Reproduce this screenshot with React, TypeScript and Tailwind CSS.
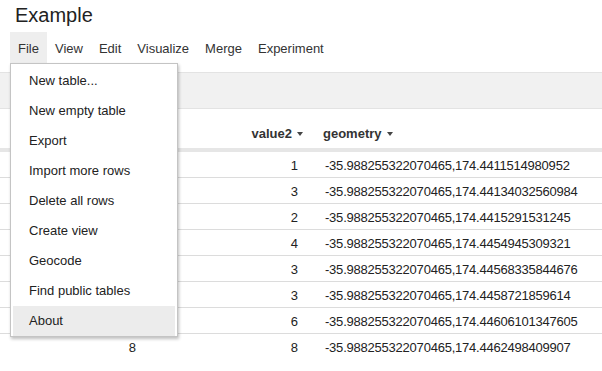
import React from 'react';

const menus = ['File', 'View', 'Edit', 'Visualize', 'Merge', 'Experiment'];

const fileItems = [
    'New table...',
    'New empty table',
    'Export',
    'Import more rows',
    'Delete all rows',
    'Create view',
    'Geocode',
    'Find public tables',
    'About',
];

const rows = [
    { value: 1, value2: 1, geometry: '-35.988255322070465,174.4411514980952' },
    { value: 2, value2: 3, geometry: '-35.988255322070465,174.44134032560984' },
    { value: 3, value2: 2, geometry: '-35.988255322070465,174.4415291531245' },
    { value: 4, value2: 4, geometry: '-35.988255322070465,174.4454945309321' },
    { value: 5, value2: 3, geometry: '-35.988255322070465,174.44568335844676' },
    { value: 6, value2: 3, geometry: '-35.988255322070465,174.4458721859614' },
    { value: 7, value2: 6, geometry: '-35.988255322070465,174.44606101347605' },
    { value: 8, value2: 8, geometry: '-35.988255322070465,174.4462498409907' },
];

const SortArrow = () => (
    <span className="inline-block ml-[5px] mb-[2px] w-0 h-0 border-l-[3.5px] border-r-[3.5px] border-t-[4px] border-l-transparent border-r-transparent border-t-[#444]" />
);

const FileMenu = () => (
    <div className="absolute left-0 top-full z-10 w-[168px] bg-white border border-[#c4c4c4] shadow-[1px_2px_3px_rgba(0,0,0,0.25)] pt-[2px] px-[2px] pb-0">
        {fileItems.map((item) => (
            <div
                key={item}
                className={`h-[30px] leading-[30px] pl-[16px] text-[#222] whitespace-nowrap ${item === 'About' ? 'bg-[#ececec]' : ''}`}
            >
                {item}
            </div>
        ))}
    </div>
);

export default function App() {
    return (
        <div className="w-[602px] h-[371px] overflow-hidden bg-white text-[13px] text-[#222] font-['Liberation_Sans',Arial,sans-serif]">
            <h1 className="h-[32px] pt-[2px] pl-[15px] text-[20px] leading-[26px] text-[#222]">Example</h1>

            {/* Menu bar */}
            <div className="flex h-[31px] pl-[10px]">
                {menus.map((m) => (
                    <div
                        key={m}
                        className={`relative h-full px-[8px] pt-[2px] leading-[29px] text-[#333] ${m === 'File' ? 'bg-[#eeeeee]' : ''}`}
                    >
                        {m}
                        {m === 'File' && <FileMenu />}
                    </div>
                ))}
            </div>

            {/* Toolbar */}
            <div className="mt-[9px] h-[37px] bg-[#f1f1f1] border-y border-[#e3e3e3]" />

            {/* Table */}
            <div className="flex h-[43px] border-b-4 border-[#e6e6e6] font-bold text-[#333] pt-[17px] leading-[16px]">
                <div className="w-[145px] text-right pr-[5px]">value<SortArrow /></div>
                <div className="w-[169px] text-right pr-[11px]">value2<SortArrow /></div>
                <div className="flex-1 pl-[9px]">geometry<SortArrow /></div>
            </div>
            {rows.map((r, i) => (
                <div
                    key={i}
                    className={`flex h-[26px] pt-[2px] items-center ${i < rows.length - 1 ? 'border-b border-[#dcdcdc]' : ''}`}
                >
                    <div className="w-[145px] text-right pr-[9px]">{r.value}</div>
                    <div className="w-[169px] text-right pr-[16px]">{r.value2}</div>
                    <div className="flex-1 pl-[11px] whitespace-nowrap tracking-[-0.22px]">{r.geometry}</div>
                </div>
            ))}
        </div>
    );
}
